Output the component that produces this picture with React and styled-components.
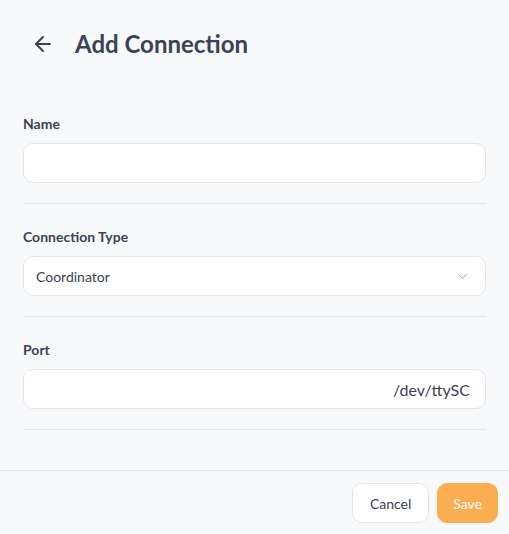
import styled, { createGlobalStyle } from 'styled-components'
import { ArrowLeft, ChevronDown } from 'lucide-react'

const GlobalStyle = createGlobalStyle`
  html, body {
    margin: 0;
    padding: 0;
    background: #f8f9fb;
  }
  body {
    font-family: Lato, 'Noto Sans', sans-serif;
    color: #3b4256;
  }
  * {
    box-sizing: border-box;
  }
`

const Page = styled.div`
  width: 509px;
  height: 534px;
  display: flex;
  flex-direction: column;
  background: #f8f9fb;
`

const Header = styled.header`
  display: flex;
  align-items: center;
  gap: 16px;
  height: 91px;
  padding: 0 23px 3px;
`

const BackButton = styled.button`
  display: flex;
  align-items: center;
  justify-content: center;
  padding: 4px;
  margin-left: 4px;
  border: none;
  background: none;
  color: #3b4256;
  cursor: pointer;
`

const Title = styled.h1`
  margin: 0;
  font-size: 24px;
  font-weight: 700;
  line-height: 32px;
`

const Form = styled.div`
  flex: 1;
  padding: 0 23px;
`

const Section = styled.div`
  padding: 25px 0 20px;
  border-bottom: 1px solid #e3e6eb;
`

const Label = styled.label`
  display: block;
  font-size: 14px;
  font-weight: 700;
  line-height: 16px;
  margin-bottom: 11px;
  color: #3b4256;
`

const Field = styled.div`
  position: relative;
  display: flex;
  align-items: center;
  justify-content: ${(p) => (p.$align === 'right' ? 'flex-end' : 'space-between')};
  height: 40px;
  padding: 0 15px 0 12px;
  background: #fff;
  border: 1px solid #e3e6eb;
  border-radius: 10px;
  font-size: ${(p) => (p.$align === 'right' ? '16px' : '14px')};
  color: #3b4256;
`

const Footer = styled.footer`
  display: flex;
  justify-content: flex-end;
  gap: 8px;
  padding: 12px 11px 11px;
  border-top: 1px solid #e3e6eb;
  margin-top: 40px;
`

const Button = styled.button`
  height: 40px;
  padding: 0 ${(p) => (p.$primary ? '15px' : '17px')};
  border-radius: 10px;
  border: 1px solid ${(p) => (p.$primary ? '#fcad50' : '#e3e6eb')};
  background: ${(p) => (p.$primary ? '#fcad50' : '#fff')};
  color: ${(p) => (p.$primary ? '#fff' : '#3b4256')};
  font-family: Lato, 'Noto Sans', sans-serif;
  font-size: 14px;
  cursor: pointer;
`

export default function App() {
  return (
    <Page>
      <GlobalStyle />
      <Header>
        <BackButton aria-label='Back'>
          <ArrowLeft size={24} strokeWidth={2} />
        </BackButton>
        <Title>Add Connection</Title>
      </Header>
      <Form>
        <Section>
          <Label>Name</Label>
          <Field />
        </Section>
        <Section>
          <Label>Connection Type</Label>
          <Field>
            <span>Coordinator</span>
            <ChevronDown size={15} color='#9aa0ab' strokeWidth={1.5} />
          </Field>
        </Section>
        <Section>
          <Label>Port</Label>
          <Field $align='right'>/dev/ttySC</Field>
        </Section>
      </Form>
      <Footer>
        <Button>Cancel</Button>
        <Button $primary>Save</Button>
      </Footer>
    </Page>
  )
}
